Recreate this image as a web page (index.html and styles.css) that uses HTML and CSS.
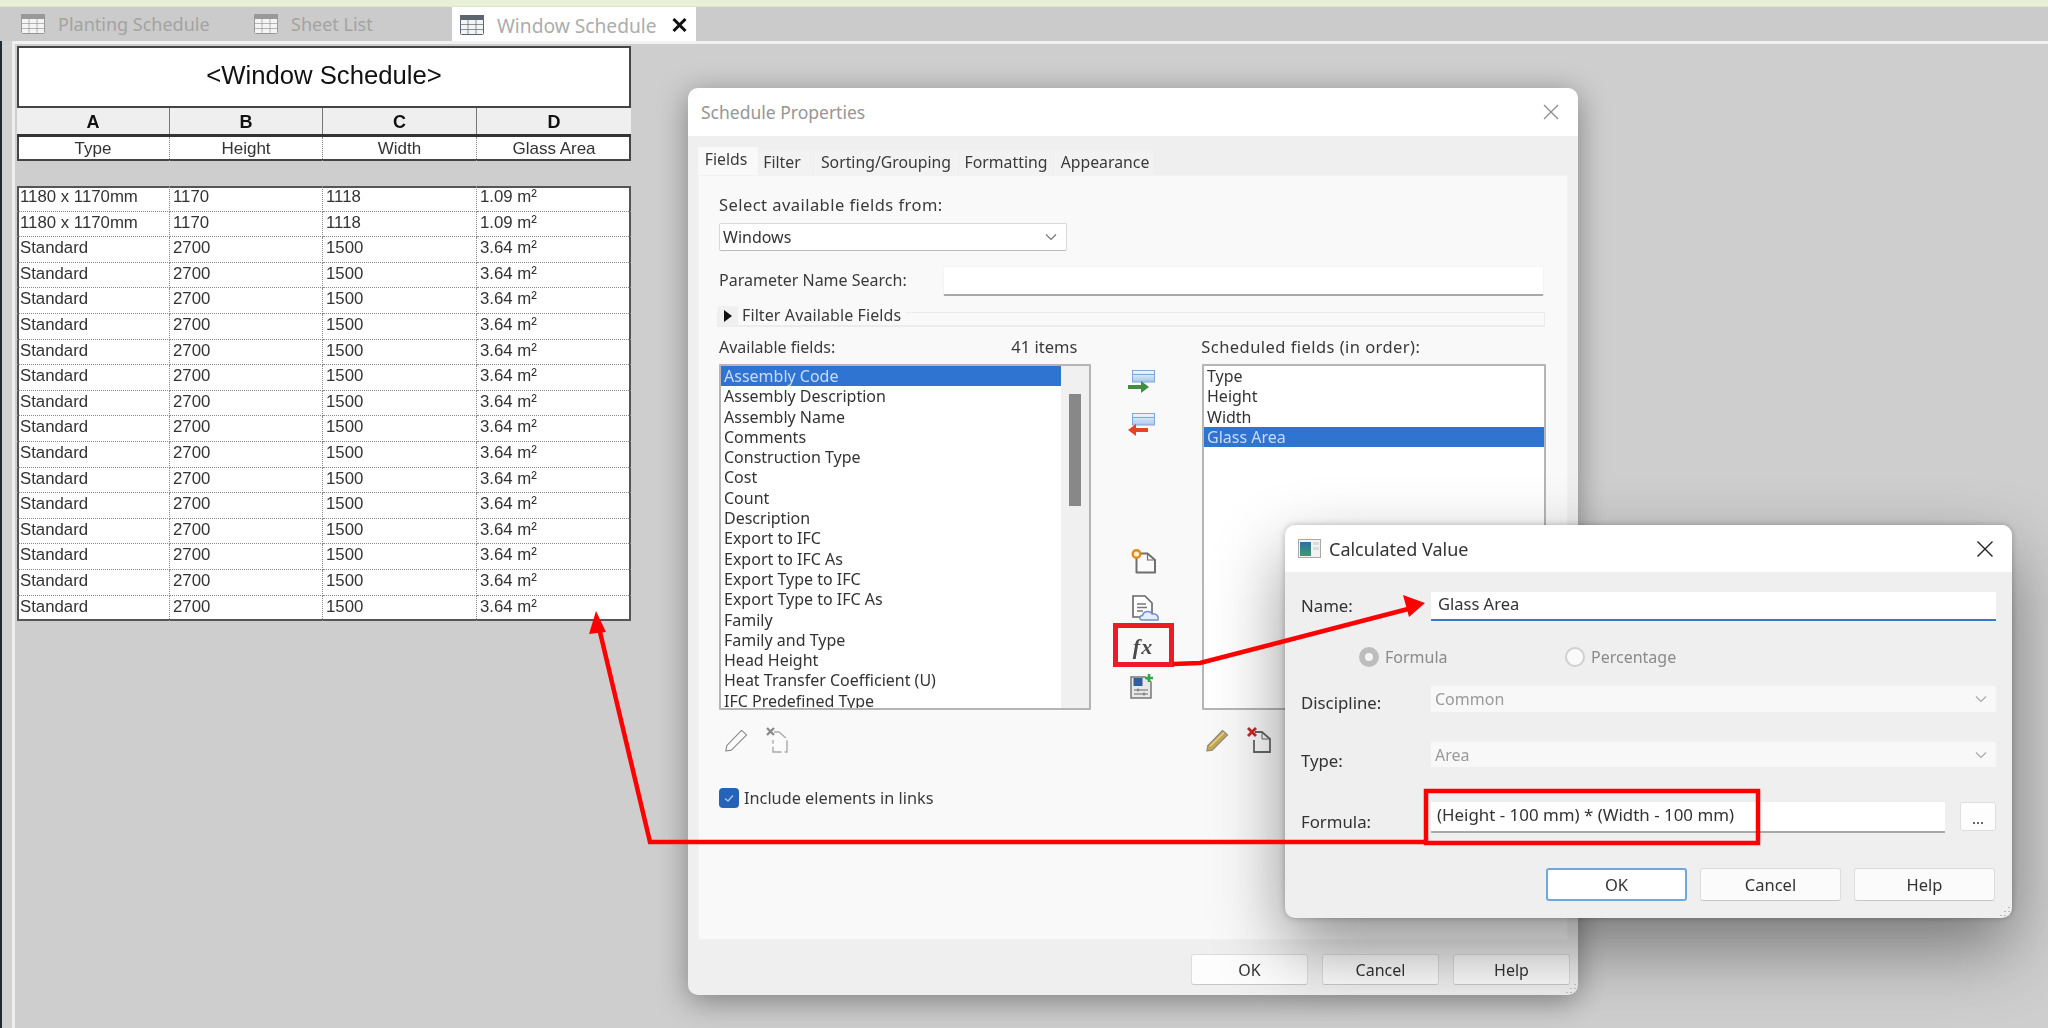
FILE: index.html
```html
<!DOCTYPE html>
<html lang="en">
<head>
<meta charset="utf-8">
<title>Window Schedule</title>
<link rel="stylesheet" href="styles.css">
</head>
<body>
<svg class="defs" width="0" height="0" aria-hidden="true">
  <defs>
    <symbol id="tbl" viewBox="0 0 24 20">
      <rect x="0.5" y="0.5" width="23" height="19" rx="1" fill="#f4f4f4" stroke="currentColor"/>
      <rect x="0" y="0" width="24" height="5" fill="currentColor"/>
      <path d="M1 9.5H23M1 14.5H23M8 5V19M16 5V19" stroke="currentColor" stroke-width="1" opacity=".7" fill="none"/>
    </symbol>
    <linearGradient id="bandg" x1="0" y1="0" x2="0" y2="1">
      <stop offset="0" stop-color="#f4f8fd"/><stop offset="1" stop-color="#a9c8ea"/>
    </linearGradient>
    <linearGradient id="panelg" x1="0" y1="0" x2="0" y2="1">
      <stop offset="0" stop-color="#2e6fa8"/><stop offset="1" stop-color="#3f9a6b"/>
    </linearGradient>
    <symbol id="band" viewBox="0 0 23 13">
      <rect x="0.5" y="0.5" width="22" height="11.5" fill="url(#bandg)" stroke="#7fa8d8"/>
      <path d="M1 4.5H22" stroke="#7fa8d8" fill="none"/>
    </symbol>
    <symbol id="chev" viewBox="0 0 12 8">
      <path d="M1 1.5L6 6.5L11 1.5" fill="none" stroke="currentColor" stroke-width="1.2"/>
    </symbol>
    <symbol id="pagec" viewBox="0 0 24 26">
      <path d="M4 5.5H15L22.5 12V24.5H4Z" fill="#fbfbfb" stroke="currentColor" stroke-width="2" stroke-linejoin="round"/>
      <path d="M15 5.5V12H22.5" fill="none" stroke="currentColor" stroke-width="1.2"/>
    </symbol>
    <symbol id="pencil" viewBox="0 0 26 26">
      <path d="M3 19L19 2.5L24.5 7.5L8 24L2 25Z" fill="currentColor" stroke="#8a8a8a" stroke-width="1.2" stroke-linejoin="round"/>
      <path d="M5.5 20L20.5 5" stroke="#fff" stroke-opacity=".6" fill="none" stroke-width="1.2"/>
    </symbol>
  </defs>
</svg>

<div class="topbar"></div>
<div class="tabstrip">
  <div class="doc-tab tab-a"><svg class="tab-icon"><use href="#tbl"/></svg><span>Planting Schedule</span></div>
  <div class="doc-tab tab-b"><svg class="tab-icon"><use href="#tbl"/></svg><span>Sheet List</span></div>
  <div class="doc-tab tab-c"><svg class="tab-icon"><use href="#tbl"/></svg><span>Window Schedule</span><svg class="tab-close" viewBox="0 0 15 14"><path d="M1.500 1L13.500 13M13.500 1L1.500 13" stroke="#111" stroke-width="3" fill="none"/></svg></div>
</div>
<div class="workspace">
  <div class="side-strip"><div class="side-dark"></div><div class="side-mid"></div><div class="side-white"></div></div>
  <main class="sched">
    <div class="sched-title">&lt;Window Schedule&gt;</div>
    <div class="sched-cols"><div>A</div><div>B</div><div>C</div><div>D</div></div>
    <div class="sched-heads"><div>Type</div><div>Height</div><div>Width</div><div>Glass Area</div></div>
    <div class="sched-gap"></div>
    <div class="sched-rows">
      <div>1180 x 1170mm</div><div>1170</div><div>1118</div><div>1.09 m²</div>
      <div>1180 x 1170mm</div><div>1170</div><div>1118</div><div>1.09 m²</div>
      <div>Standard</div><div>2700</div><div>1500</div><div>3.64 m²</div>
      <div>Standard</div><div>2700</div><div>1500</div><div>3.64 m²</div>
      <div>Standard</div><div>2700</div><div>1500</div><div>3.64 m²</div>
      <div>Standard</div><div>2700</div><div>1500</div><div>3.64 m²</div>
      <div>Standard</div><div>2700</div><div>1500</div><div>3.64 m²</div>
      <div>Standard</div><div>2700</div><div>1500</div><div>3.64 m²</div>
      <div>Standard</div><div>2700</div><div>1500</div><div>3.64 m²</div>
      <div>Standard</div><div>2700</div><div>1500</div><div>3.64 m²</div>
      <div>Standard</div><div>2700</div><div>1500</div><div>3.64 m²</div>
      <div>Standard</div><div>2700</div><div>1500</div><div>3.64 m²</div>
      <div>Standard</div><div>2700</div><div>1500</div><div>3.64 m²</div>
      <div>Standard</div><div>2700</div><div>1500</div><div>3.64 m²</div>
      <div>Standard</div><div>2700</div><div>1500</div><div>3.64 m²</div>
      <div>Standard</div><div>2700</div><div>1500</div><div>3.64 m²</div>
      <div>Standard</div><div>2700</div><div>1500</div><div>3.64 m²</div>
    </div>
  </main>
</div>

<section class="dialog dlg-props">
  <header class="dlg-title"><span class="dlg-title-text inactive">Schedule Properties</span>
    <svg class="dlg-x inactive" viewBox="0 0 16 16"><path d="M1 1L15 15M15 1L1 15" stroke="currentColor" stroke-width="1.3" fill="none"/></svg>
  </header>
  <div class="props-body">
    <nav class="props-tabs">
      <span class="ptab active">Fields</span><span class="ptab w-filter">Filter</span><span class="ptab w-sort">Sorting/Grouping</span><span class="ptab w-format">Formatting</span><span class="ptab w-appear">Appearance</span>
    </nav>
    <div class="props-panel">
      <div class="lbl lbl-select">Select available fields from:</div>
      <div class="combo"><span>Windows</span><svg class="chev"><use href="#chev"/></svg></div>
      <div class="search-row"><span class="lbl">Parameter Name Search:</span><div class="search-input"></div></div>
      <div class="filter-row"><span class="tri-box"><i class="tri"></i></span><span class="lbl filter-lbl">Filter Available Fields</span></div>
      <div class="list-heads"><span class="lbl">Available fields:</span><span class="lbl items">41 items</span><span class="lbl sched-lbl">Scheduled fields (in order):</span></div>
      <div class="lists">
        <div class="listbox avail">
          <div class="list-items">
            <div class="sel">Assembly Code</div><div>Assembly Description</div><div>Assembly Name</div><div>Comments</div><div>Construction Type</div><div>Cost</div><div>Count</div><div>Description</div><div>Export to IFC</div><div>Export to IFC As</div><div>Export Type to IFC</div><div>Export Type to IFC As</div><div>Family</div><div>Family and Type</div><div>Head Height</div><div>Heat Transfer Coefficient (U)</div><div>IFC Predefined Type</div>
          </div>
          <div class="scrollbar"><div class="thumb"></div></div>
        </div>
        <div class="mid-icons">
          <svg class="ic ic-add" viewBox="0 0 27 26"><use href="#band" x="4" y="1" width="23" height="13"/><path d="M0 16H13V12L21 18L13 24V20H0Z" fill="#3f8f3f"/></svg>
          <svg class="ic ic-rem" viewBox="0 0 27 26"><use href="#band" x="4" y="1" width="23" height="13"/><path d="M20 16H8V12L0 18L8 24V20H20Z" fill="#e8412a"/></svg>
          <svg class="ic ic-new" viewBox="0 0 26 26"><use href="#pagec" x="2" y="0" width="24" height="26" color="#6f6f6f"/><circle cx="6" cy="6" r="3.8" fill="#fff2c0" stroke="#e08a1e" stroke-width="2.4"/></svg>
          <svg class="ic ic-cloud" viewBox="0 0 27 26"><path d="M1 1H13L20 8V22H1Z" fill="#fff" stroke="#666" stroke-width="1.6"/><path d="M5 9H14M5 12.5H15M5 16H11" stroke="#777" stroke-width="1.4" fill="none"/><path d="M10 25C7 25 7 20.500 10.500 20.500C11.500 16 18 15 20 19C24 18 27 21 26 25Z" fill="#e6eefb" stroke="#6e8fd0" stroke-width="1.5"/></svg>
          <span class="ic-fx">fx</span>
          <svg class="ic ic-calc" viewBox="0 0 25 26"><path d="M1 4H15L21 9V25H1Z" fill="#e8e8e8" stroke="#777" stroke-width="1.5"/><rect x="3.500" y="5" width="9" height="8" fill="#2f5f9f"/><path d="M4 17H18M4 21H18M8 15.500V18.500M14 19.500V22.500" stroke="#666" stroke-width="1.100" fill="none"/><path d="M19 1V9M15 5H23" stroke="#2fa84a" stroke-width="2.600"/></svg>
        </div>
        <div class="listbox chosen">
          <div class="list-items">
            <div>Type</div><div>Height</div><div>Width</div><div class="sel">Glass Area</div>
          </div>
        </div>
      </div>
      <div class="edit-row">
        <div class="edit-group left">
          <svg class="ic-edit faded"><use href="#pencil"/></svg>
          <svg class="ic-del faded" viewBox="0 0 24 26"><path d="M8 5H13L21 12V25H7V13" fill="#fbfbfb" stroke="#aaa" stroke-width="1.400" stroke-dasharray="14 3"/><path d="M1 1L8 8M8 1L1 8" stroke="#888" stroke-width="2.200"/></svg>
        </div>
        <div class="edit-group right">
          <svg class="ic-edit pencil-live"><use href="#pencil"/></svg>
          <svg class="ic-del" viewBox="0 0 24 26"><path d="M8 5H15L23 12V25H7V13" fill="#fbfbfb" stroke="#666" stroke-width="1.800"/><path d="M15 5V12H23" fill="none" stroke="#666"/><path d="M1 1L9 9M9 1L1 9" stroke="#c22a2a" stroke-width="2.800"/></svg>
        </div>
      </div>
      <label class="check-row"><span class="check"><svg viewBox="0 0 20 20"><path d="M6 10.500L9 13L14 7.500" stroke="#a9c4ec" stroke-width="1.400" fill="none"/></svg></span><span class="lbl">Include elements in links</span></label>
    </div>
    <footer class="props-foot">
      <span class="btn">OK</span><span class="btn">Cancel</span><span class="btn">Help</span>
    </footer>
  </div>
</section>

<section class="dialog dlg-calc">
  <header class="dlg-title calc-title">
    <svg class="calc-icon" viewBox="0 0 23 19"><rect x="0.500" y="0.500" width="22" height="18" fill="#f2f2f2" stroke="#a9a9a9"/><rect x="2" y="3" width="11" height="14" fill="url(#panelg)"/><path d="M15 3H21V6H15ZM15 8H21V11H15Z" fill="#dcdcdc"/></svg>
    <span class="dlg-title-text">Calculated Value</span>
    <svg class="dlg-x" viewBox="0 0 16 16"><path d="M0.500 0.500L15.500 15.500M15.500 0.500L0.500 15.500" stroke="currentColor" stroke-width="1.400" fill="none"/></svg>
  </header>
  <div class="calc-body">
    <div class="calc-field f-name"><span class="flabel">Name:</span><div class="finput focused">Glass Area</div></div>
    <div class="radio-row">
      <span class="radio-item"><i class="radio on"></i>Formula</span>
      <span class="radio-item"><i class="radio"></i>Percentage</span>
    </div>
    <div class="calc-field f-disc"><span class="flabel">Discipline:</span><div class="fcombo"><span>Common</span><svg class="chev"><use href="#chev"/></svg></div></div>
    <div class="calc-field f-type"><span class="flabel">Type:</span><div class="fcombo"><span>Area</span><svg class="chev"><use href="#chev"/></svg></div></div>
    <div class="calc-field f-form"><span class="flabel">Formula:</span><div class="form-wrap"><div class="finput formula">(Height - 100 mm) * (Width - 100 mm)</div><span class="dots">...</span></div></div>
    <footer class="calc-foot">
      <span class="btn cbtn primary">OK</span><span class="btn cbtn">Cancel</span><span class="btn cbtn">Help</span>
    </footer>
  </div>
  <svg class="grip" viewBox="0 0 12 12"><path d="M10 2V3M6 6V7M10 6V7M2 10V11M6 10V11M10 10V11" stroke="#bbb" stroke-width="2" fill="none"/></svg>
</section>
<svg class="grip grip-props" viewBox="0 0 12 12"><path d="M10 2V3M6 6V7M10 6V7M2 10V11M6 10V11M10 10V11" stroke="#bbb" stroke-width="2" fill="none"/></svg>

<svg class="annot" viewBox="0 0 2048 1028" aria-hidden="true">
  <rect class="box-fx" x="1115.500" y="625.500" width="56" height="39"/>
  <rect class="box-form" x="1426" y="791" width="332" height="52"/>
  <path class="ln" d="M1173 664L1200 663L1408 609"/>
  <polygon class="hd" points="1425,603 1403,595 1409,617"/>
  <path class="ln" d="M1425 842H650L600 632"/>
  <polygon class="hd" points="596,611 589,634 606,632"/>
</svg>
</body>
</html>
```
FILE: styles.css
```css
* { box-sizing: border-box; }
html, body { margin: 0; height: 100%; }
body {
  width: 2048px;
  height: 1028px;
  overflow: hidden;
  position: relative;
  background: #cecece;
  font-family: "Noto Sans", "Liberation Sans", sans-serif;
  color: #333;
  display: flex;
  flex-direction: column;
  filter: blur(.4px);
}
.defs { position: absolute; }

/* document chrome */
.topbar { height: 7px; background: #e8f0d8; border-bottom: 1px solid #dfe6cf; flex: none; }
.tabstrip {
  height: 34px; flex: none; background: #cbcbcb;
  display: flex; padding-left: 10px;
}
.doc-tab {
  display: flex; align-items: center; gap: 13px;
  font-size: 18px; color: #a3a3a3; height: 100%; flex: none;
}
.tab-a { width: 232px; padding-left: 11px; }
.tab-b { width: 210px; padding-left: 12px; }
.tab-c { width: 244px; padding: 2px 9px 0 8px; background: #fff; color: #acacac; font-size: 19.200px; }
.tab-icon { width: 24px; height: 20px; color: #999; flex: none; }
.tab-c .tab-icon { color: #5c6670; }
.tab-close { width: 15px; height: 14px; margin-left: auto; flex: none; }
.workspace {
  flex: 1; display: flex; border-top: 3px solid #f2f2f2; min-height: 0;
  margin-left: 12px; position: relative;
}
.side-strip { position: absolute; left: -12px; top: -3px; bottom: 0; width: 15px; display: flex; }
.side-dark { width: 2px; background: #222a33; }
.side-mid { width: 10px; background: #d2d2d2; }
.side-white { width: 3px; background: #efefef; }

/* schedule */
.sched {
  margin: 2px 0 0 5px; width: 614px;
  font-family: "Liberation Sans", Arial, sans-serif; color: #333;
}
.sched-title {
  height: 62px; background: #fff; border: 2px solid #444;
  display: flex; align-items: center; justify-content: center;
  font-size: 25.700px; color: #111; padding-bottom: 3px;
}
.sched-cols, .sched-heads, .sched-rows { display: grid; grid-template-columns: 153px 153px 154px 154px; }
.sched-cols { height: 29px; background: #efefef; border-bottom: 3px solid #333; font-weight: 700; font-size: 18px; color: #111; }
.sched-cols > div { display: flex; align-items: center; justify-content: center; border-right: 1px solid #777; padding-top: 2px; }
.sched-cols > div:last-child { border-right: 0; }
.sched-heads { height: 24px; background: #fff; box-shadow: inset 2px 0 #444, inset -2px 0 #444, inset 0 -2px #444; font-size: 17px; }
.sched-heads > div { display: flex; align-items: center; justify-content: center; border-right: 1px dotted #888; padding-bottom: 1px; }
.sched-heads > div:last-child { border-right: 0; }
.sched-gap { height: 25px; }
.sched-rows {
  background: #fff; box-shadow: inset 0 0 0 2px #555; grid-auto-rows: 25.600px; font-size: 16.800px;
  height: 435px;
}
.sched-rows > div {
  padding-left: 3px; line-height: 22px;
  border-right: 1px dotted #888; border-bottom: 1px dotted #888;
}
.sched-rows > div:nth-child(4n) { border-right: 0; }
.sched-rows > div:nth-last-child(-n+4) { border-bottom: 0; }

/* dialogs */
.dialog { position: absolute; border-radius: 10px; overflow: hidden; background: #efefef; display: flex; flex-direction: column; }
.dlg-props { left: 688px; top: 88px; width: 890px; height: 907px; box-shadow: 0 6px 30px rgba(0,0,0,.38); }
.dlg-calc { left: 1285px; top: 525px; width: 727px; height: 393px; overflow: visible; box-shadow: 0 30px 70px rgba(0,0,0,.42), 0 0 6px rgba(0,0,0,.25); }
.dlg-title {
  flex: none; height: 48px; background: #fff; display: flex; align-items: center;
  padding: 0 19px 0 13px; border-radius: 10px 10px 0 0;
}
.dlg-title-text { font-size: 17.500px; color: #333; }
.dlg-title-text.inactive { color: #969696; }
.dlg-x { width: 16px; height: 16px; margin-left: auto; flex: none; color: #222; }
.dlg-x.inactive { color: #8c8c8c; }

/* properties */
.props-body { flex: 1; display: flex; flex-direction: column; padding: 11px 8px 10px 10px; min-height: 0; }
.props-tabs { display: flex; align-items: flex-end; height: 28px; flex: none; gap: 1px; }
.ptab {
  height: 25px; background: #f2f2f2; font-size: 15.800px; line-height: 24px; text-align: center; color: #3a3a3a; white-space: nowrap;
}
.ptab.active { height: 28px; width: 60px; background: #f9f9f9; line-height: 24px; padding-right: 4px; }
.w-filter { width: 54px; padding-right: 8px; }
.w-sort { width: 144px; }
.w-format { width: 94px; }
.w-appear { width: 99px; padding-left: 3px; }
.props-panel {
  flex: none; height: 765px; width: 870px; background: #f9f9f9; padding: 20px 0 0 21px;
  box-shadow: inset 0 0 0 1px #f2f2f2;
}
.lbl { font-size: 16px; line-height: 20px; color: #3a3a3a; white-space: nowrap; }
.lbl-select { font-size: 16.500px; letter-spacing: .45px; }
.combo {
  margin-top: 8px; width: 348px; height: 28px; background: #fff; border: 1px solid #d8d8d8; border-bottom-color: #bcbcbc;
  display: flex; align-items: center; padding: 0 9px 0 3px; font-size: 16px; border-radius: 2px; color: #333;
}
.chev { width: 12px; height: 8px; margin-left: auto; color: #777; flex: none; }
.search-row { margin-top: 15px; height: 30px; width: 825px; display: flex; align-items: center; justify-content: space-between; }
.search-row .lbl { padding-bottom: 3px; }
.search-input { width: 601px; height: 30px; background: #fff; border: 1px solid #f4f4f4; border-bottom: 2px solid #a8a8a8; border-radius: 2px; }
.filter-row {
  margin: 16px 0 0 -2px; width: 828px; height: 15px; border: 1px solid #ececec; border-width: 1px 1px 2px 1px; display: flex; align-items: flex-start;
}
.tri-box { width: 20px; height: 20px; margin-top: -7px; background: #f0f0f0; display: flex; align-items: center; justify-content: center; }
.tri { width: 0; height: 0; border-left: 8px solid #111; border-top: 6.500px solid transparent; border-bottom: 6.500px solid transparent; }
.filter-lbl { background: #f9f9f9; padding: 0 4px; margin-top: -8px; font-size: 16px; letter-spacing: .1px; }
.list-heads { margin-top: 10px; height: 20px; display: flex; }
.items { margin-left: 176px; font-size: 16.500px; }
.sched-lbl { margin-left: 124px; font-size: 16.500px; letter-spacing: .45px; }
.lists { margin-top: 7px; display: flex; height: 346px; align-items: stretch; }
.listbox {
  background: #fff; border: 2px solid #b5b5b5; border-radius: 1px; overflow: hidden; display: flex; position: relative;
  font-size: 16px; line-height: 20.300px; color: #333;
}
.avail { width: 372px; }
.chosen { width: 344px; }
.list-items { flex: 1; min-width: 0; white-space: nowrap; }
.list-items > div { padding-left: 3px; height: 20.300px; }
.list-items .sel { background: #2f74d0; color: #c9dcf5; }
.scrollbar { width: 28px; background: #f0f0f0; flex: none; padding: 28px 8px 0; }
.thumb { height: 112px; width: 12px; background: #888; }
.mid-icons { width: 111px; display: flex; flex-direction: column; align-items: flex-start; padding-left: 37px; }
.ic { width: 27px; height: 26px; display: block; flex: none; }
.ic-add { margin-top: 5px; }
.ic-rem { margin-top: 17px; }
.ic-new { margin-top: 110px; margin-left: 2px; }
.ic-cloud { margin-top: 21px; margin-left: 4px; }
.ic-fx {
  margin: 14px 0 0 2px; height: 24px; width: 26px; font: italic 700 22px/24px "Liberation Serif", serif; color: #4a4a4a; flex: none; text-align: center; letter-spacing: 1px;
}
.ic-calc { margin-top: 14px; margin-left: 1px; }
.edit-row { margin-top: 17px; height: 26px; display: flex; }
.edit-group { display: flex; align-items: center; gap: 17px; }
.edit-group.left { margin-left: 5px; width: 481px; }
.ic-edit { width: 24px; height: 26px; display: block; }
.ic-del { width: 26px; height: 26px; display: block; }
.faded { color: #fafafa; }
.pencil-live { color: #c9a84a; }
.check-row { margin-top: 35px; display: flex; align-items: center; gap: 5px; height: 20px; }
.check { width: 20px; height: 20px; background: #2563b8; border-radius: 4px; display: block; }
.check svg { display: block; width: 20px; height: 20px; }
.check-row .lbl { font-size: 16.300px; }
.props-foot { margin-top: 14px; display: flex; justify-content: flex-end; gap: 14px; }
.btn {
  display: flex; align-items: center; justify-content: center;
  width: 117px; height: 31px; background: #fdfdfd; border: 1px solid #dcdcdc; border-bottom-color: #c8c8c8;
  border-radius: 3px; font-size: 16px; color: #333;
}

/* calculated value */
.calc-title { height: 47px; padding: 0 19px 0 13px; gap: 8px; }
.calc-icon { width: 23px; height: 19px; flex: none; }
.calc-title .dlg-title-text { font-size: 18px; }
.calc-body { padding: 20px 16px 0; flex: 1; }
.calc-field { display: flex; align-items: center; }
.flabel { width: 130px; flex: none; font-size: 16.800px; color: #333; }
.f-name { height: 29px; }
.f-name .flabel { padding-bottom: 2px; }
.finput { flex: 1; background: #fff; height: 100%; font-size: 16.500px; padding: 0 7px; color: #333; }
.finput.focused { border-bottom: 2px solid #3a78c8; line-height: 24px; }
.radio-row { margin-top: 26px; height: 20px; display: flex; padding-left: 58px; }
.radio-item { display: flex; align-items: center; gap: 6px; width: 206px; font-size: 16px; color: #8a8a8a; }
.radio { width: 20px; height: 20px; border-radius: 50%; background: #fafafa; border: 2px solid #d0d0d0; display: block; flex: none; }
.radio.on { border: 6px solid #bdbdbd; background: #f4f4f4; }
.f-disc { margin-top: 19px; height: 26px; }
.f-disc .flabel { padding-top: 6px; }
.f-type { margin-top: 30px; height: 25px; }
.f-type .flabel { padding-top: 11px; }
.fcombo {
  flex: 1; height: 100%; background: #f8f8f8; display: flex; align-items: center; padding: 0 9px 0 4px; font-size: 16px; color: #9a9a9a;
}
.fcombo .chev { color: #aaa; }
.f-form { margin-top: 35px; height: 31px; }
.f-form .flabel { padding-top: 8px; }
.form-wrap { flex: 1; display: flex; height: 100%; gap: 15px; }
.finput.formula { border-bottom: 2px solid #a8a8a8; line-height: 26px; padding: 0 6px; font-size: 16.900px; }
.dots { width: 36px; height: 29px; background: #fdfdfd; border: 1px solid #dedede; border-radius: 3px; text-align: center; font-size: 15px; line-height: 30px; flex: none; }
.calc-foot { margin-top: 35px; display: flex; justify-content: flex-end; gap: 13px; padding-right: 1px; }
.cbtn { width: 141px; height: 33px; background: #fbfbfb; font-size: 16.500px; }
.cbtn.primary { border: 2px solid #6fa8dc; background: #fff; }
.grip { position: absolute; right: 1px; bottom: 1px; width: 12px; height: 12px; }
.grip-props { left: 1565px; top: 982px; right: auto; bottom: auto; }

/* annotations */
.annot { position: absolute; left: 0; top: 0; width: 2048px; height: 1028px; pointer-events: none; }
.box-fx { fill: none; stroke: #ed1c24; stroke-width: 5; }
.box-form { fill: none; stroke: #f00; stroke-width: 4.500; }
.ln { fill: none; stroke: #f00; stroke-width: 4.500; }
.hd { fill: #f00; }
```
